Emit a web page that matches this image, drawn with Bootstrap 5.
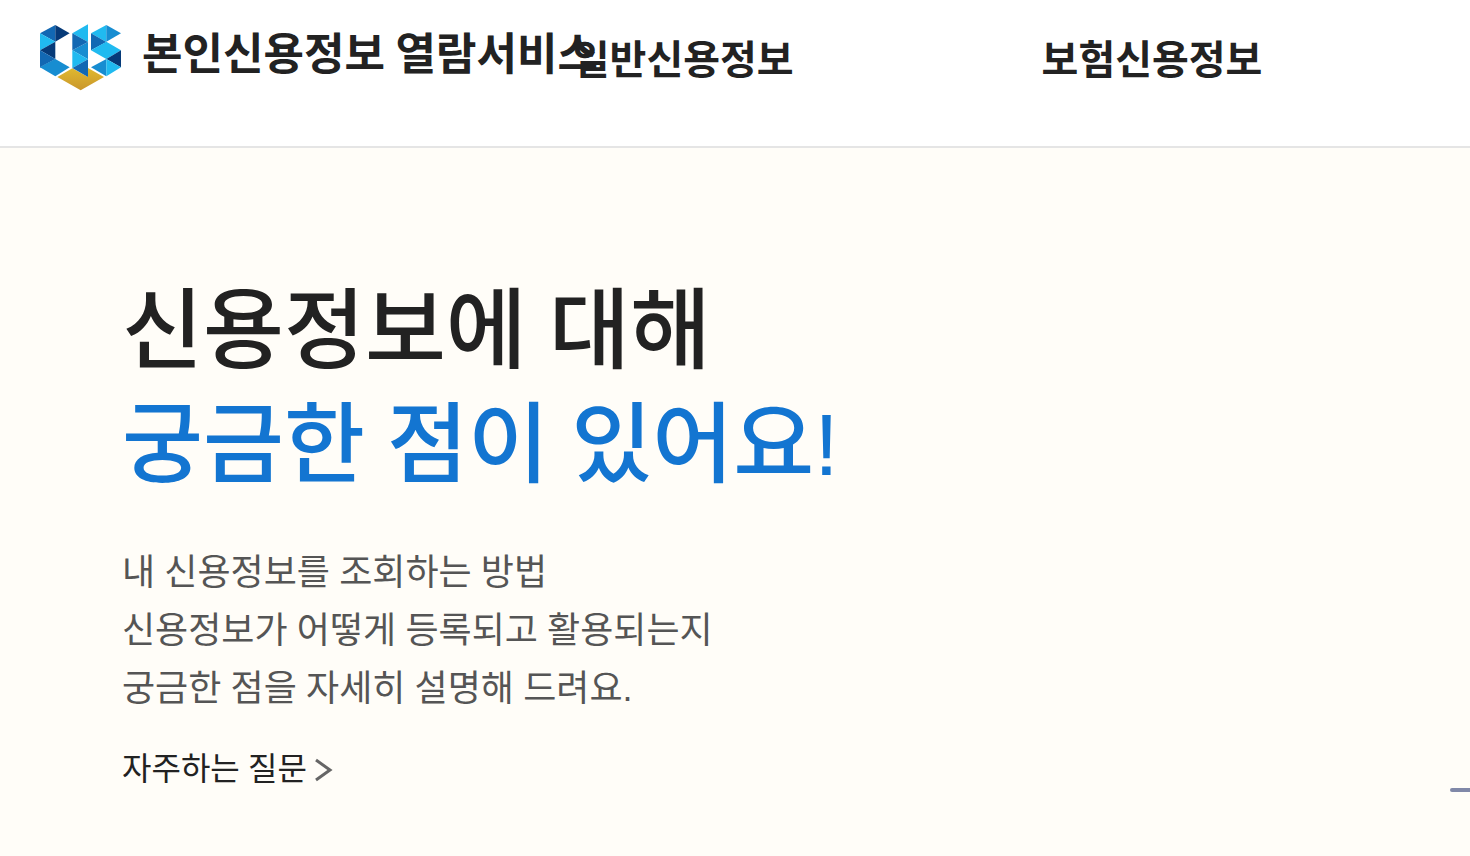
<!DOCTYPE html>
<html lang="ko">
<head>
<meta charset="utf-8">
<meta name="viewport" content="width=device-width, initial-scale=1">
<title>본인신용정보 열람서비스</title>
<link href="https://cdn.jsdelivr.net/npm/bootstrap@5.3.0/dist/css/bootstrap.min.css" rel="stylesheet">
<style>
  body { font-family: Lato, "Noto Sans CJK KR", sans-serif; color: #222; background: #fffdf8; overflow-x: hidden; }
  a { color: inherit; text-decoration: none; }
  .site-header { background: #fff; border-bottom: 2px solid #e5e5e5; padding: 24px 0 52px 40px; }
  .brand-link { flex: 0 0 36%; min-width: 0; gap: 20px; font-size: 44px; line-height: 58px; font-weight: 700; white-space: nowrap; }
  .main-menu a { font-size: 40px; line-height: 70px; font-weight: 700; white-space: nowrap; }
  .main-menu { gap: 248px; padding-left: 18px; }
  .intro { padding: 122px 0 60px 122px; }
  .intro h1 { font-size: 88px; line-height: 114px; font-weight: 500; margin-bottom: 44px; }
  .intro h1 .accent { color: #1375d1; }
  .intro .stop { font-family: "Liberation Sans", sans-serif; line-height: 1; }
  .intro p { font-size: 36px; line-height: 58px; color: #555; margin-bottom: 28px; }
  .faq-link { font-size: 32px; line-height: 48px; gap: 8px; }
  .side-line { width: 20px; height: 4px; border-radius: 2px 0 0 2px; background: #8088a8; margin-bottom: 60px; }
</style>
</head>
<body>
<header class="site-header d-flex align-items-start">
  <a class="brand-link d-flex align-items-start" href="#">
    <svg class="flex-shrink-0" width="82" height="67" viewBox="30 27 246 201" role="img" aria-label="CIS">
      <defs><linearGradient id="gold" x1="0" y1="0" x2="0" y2="1"><stop offset="0" stop-color="#e0b92f"/><stop offset="1" stop-color="#c9962c"/></linearGradient></defs>
      <path fill="url(#gold)" d="M82 186 127 160 174 186V159L222 186 152 226z"/>
      <path fill="#1268b3" d="M30 55 76 30V80z"/>
      <path fill="#063a78" d="M76 30 119 55 76 80z"/>
      <path fill="#20baf0" d="M30 55 76 80 30 106z"/>
      <path fill="#063a78" d="M76 80V132L30 106z"/>
      <path fill="#1268b3" d="M30 106 76 132 30 157z"/>
      <path fill="#1268b3" d="M30 157 76 132V134L32 158z"/>
      <path fill="#178dd1" d="M76 132 119 157 76 184 30 157z"/>
      <path fill="#20baf0" d="M174 28V81L127 55z"/>
      <path fill="#178dd1" d="M127 106 174 81V133z"/>
      <path fill="#1268b3" d="M127 55 174 81 127 106z"/>
      <path fill="#20baf0" d="M127 106 174 133 127 159z"/>
      <path fill="#1268b3" d="M174 133V186L127 159z"/>
      <path fill="#20baf0" d="M183 55 229 30V81z"/>
      <path fill="#178dd1" d="M229 30 273 55 229 80z"/>
      <path fill="#1268b3" d="M183 55 229 81 183 106z"/>
      <path fill="#20baf0" d="M229 80 273 106 229 132 183 106z"/>
      <path fill="#063a78" d="M273 106V157L229 132z"/>
      <path fill="#178dd1" d="M183 157 229 132V184z"/>
      <path fill="#20baf0" d="M229 132 273 157 229 184z"/>
    </svg>
    <span>본인신용정보 열람서비스</span>
  </a>
  <nav class="main-menu d-flex"><a href="#">일반신용정보</a><a href="#">보험신용정보</a></nav>
</header>
<main class="d-flex justify-content-between align-items-end">
  <section class="intro">
    <h1>신용정보에 대해<br><span class="accent">궁금한 점이 있어요<span class="stop">!</span></span></h1>
    <p>내 신용정보를 조회하는 방법<br>신용정보가 어떻게 등록되고 활용되는지<br>궁금한 점을 자세히 설명해 드려요<span class="stop">.</span></p>
    <a class="faq-link d-inline-flex align-items-center" href="#">자주하는 질문
      <svg class="mt-1" width="18" height="24" viewBox="0 0 18 24" fill="none" stroke="#666" stroke-width="3" aria-hidden="true"><path d="M1 2 15 12 1 22"/></svg>
    </a>
  </section>
  <div class="side-line"></div>
</main>
<script src="https://cdn.jsdelivr.net/npm/bootstrap@5.3.0/dist/js/bootstrap.bundle.min.js"></script>
</body>
</html>
